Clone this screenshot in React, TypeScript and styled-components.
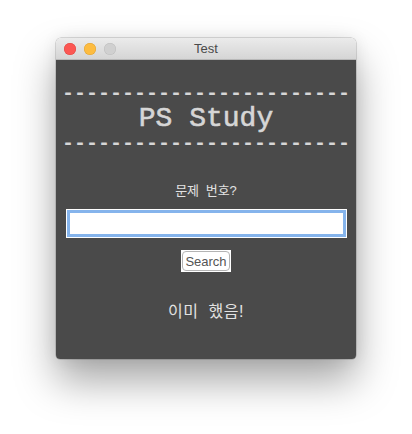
import React from "react";
import styled, { createGlobalStyle } from "styled-components";

const Global = createGlobalStyle`
  html, body { margin: 0; padding: 0; background: #ffffff; }
  body { width: 412px; height: 434px; overflow: hidden; font-family: "Liberation Sans", "Noto Sans CJK KR", sans-serif; }
`;

const Page = styled.div`
  width: 412px;
  height: 434px;
  padding: 38px 0 0 56px;
  box-sizing: border-box;
`;

const Window = styled.div`
  width: 300px;
  height: 321px;
  border-radius: 5px 5px 4px 4px;
  overflow: hidden;
  display: flex;
  flex-direction: column;
  box-shadow: 0 0 0 0.5px rgba(0,0,0,0.25), 0 22px 40px rgba(0,0,0,0.35), 0 0 16px rgba(0,0,0,0.08);
`;

const TitleBar = styled.div`
  height: 22px;
  flex: none;
  position: relative;
  display: flex;
  align-items: center;
  justify-content: center;
  background: linear-gradient(#ebebeb, #d5d5d5);
  border-bottom: 1px solid #b8b8b8;
  box-sizing: border-box;
`;

const Lights = styled.div`
  position: absolute;
  left: 8px;
  top: 5px;
  display: flex;
  gap: 8px;
`;

const Light = styled.span<{ $c: string; $b: string }>`
  width: 12px;
  height: 12px;
  border-radius: 50%;
  background: ${(p) => p.$c};
  box-shadow: inset 0 0 0 0.5px ${(p) => p.$b};
  box-sizing: border-box;
`;

const Title = styled.span`
  font-size: 13px;
  color: #4a4a4a;
`;

const Content = styled.div`
  flex: 1;
  background: #4a4a4a;
  display: flex;
  flex-direction: column;
  align-items: center;
`;

const Banner = styled.div`
  margin-top: 22px;
  display: flex;
  flex-direction: column;
  align-items: center;
  font-family: "Liberation Mono", monospace;
  color: #d6d6d6;
`;

const Dashes = styled.div`
  font-size: 20px;
  font-weight: bold;
  line-height: 24px;
  white-space: pre;
`;

const Heading = styled.div`
  font-size: 28px;
  line-height: 26px;
  white-space: pre;
  -webkit-text-stroke: 0.6px #d6d6d6;
`;

const Label = styled.div`
  margin-top: 24px;
  font-size: 13px;
  word-spacing: 3px;
  color: #e2e2e2;
  font-family: "Liberation Sans", "Noto Sans CJK KR", sans-serif;
`;

const Input = styled.input`
  margin-top: 10px;
  width: 281px;
  height: 29px;
  box-sizing: border-box;
  background: #ffffff;
  border: 1px solid #ffffff;
  outline: none;
  box-shadow: inset 0 0 0 3px #85b4ec;
  padding: 0 6px;
`;

const Button = styled.button`
  margin-top: 12px;
  width: 50px;
  height: 22px;
  box-sizing: border-box;
  background: #ffffff;
  border: none;
  border-radius: 0;
  padding: 1px;
  display: flex;
  font-family: "Liberation Sans", sans-serif;
`;

const ButtonFace = styled.span`
  flex: 1;
  border: 1px solid #b4b4b4;
  border-radius: 4px;
  display: flex;
  align-items: center;
  justify-content: center;
  font-size: 13px;
  color: #555555;
`;

const Result = styled.div`
  margin-top: 26px;
  font-size: 16px;
  word-spacing: 5px;
  letter-spacing: 0.5px;
  color: #e2e2e2;
  font-family: "Liberation Sans", "Noto Sans CJK KR", sans-serif;
`;

export default function App() {
  return (
    <Page>
      <Global />
      <Window>
        <TitleBar>
          <Lights>
            <Light $c="#fc5753" $b="#de4943" />
            <Light $c="#fdbc40" $b="#dea236" />
            <Light $c="#d0d0d0" $b="#bdbdbd" />
          </Lights>
          <Title>Test</Title>
        </TitleBar>
        <Content>
          <Banner>
            <Dashes>{"------------------------"}</Dashes>
            <Heading>PS Study</Heading>
            <Dashes>{"------------------------"}</Dashes>
          </Banner>
          <Label>문제 번호?</Label>
          <Input />
          <Button>
            <ButtonFace>Search</ButtonFace>
          </Button>
          <Result>이미 했음!</Result>
        </Content>
      </Window>
    </Page>
  );
}
